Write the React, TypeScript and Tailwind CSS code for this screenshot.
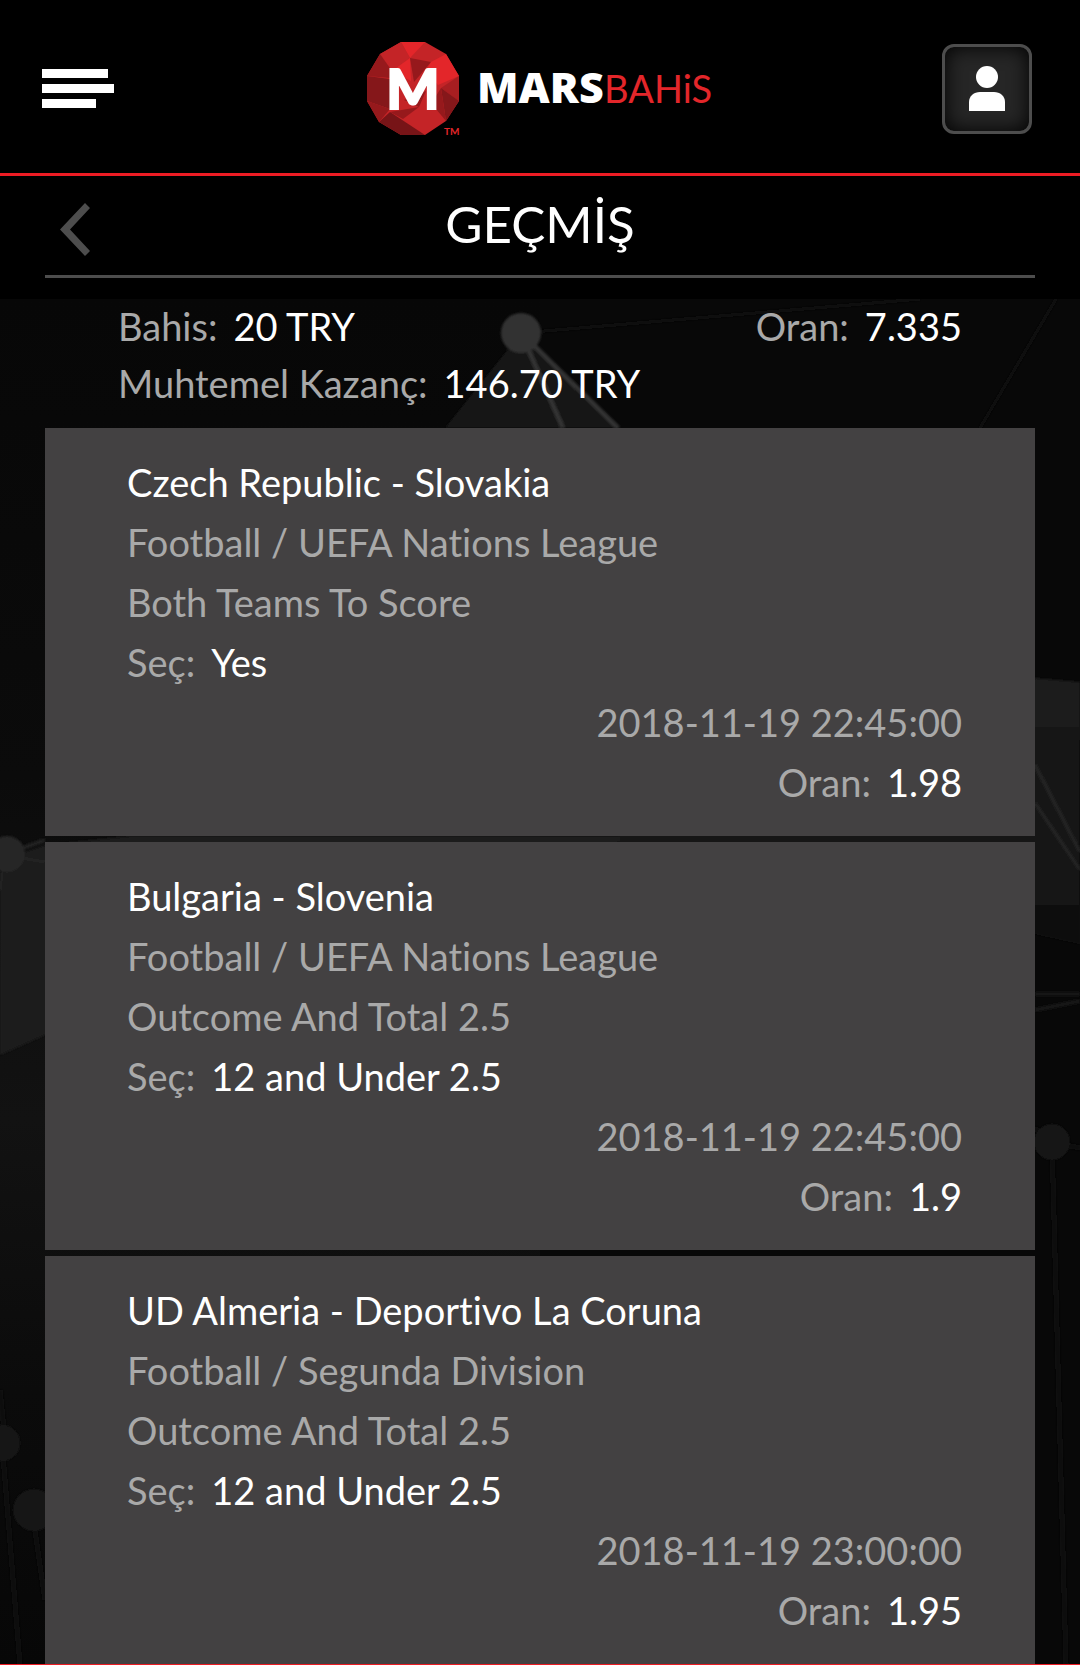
import { ReactNode } from "react";

interface Bet {
  match: string;
  league: string;
  market: string;
  pick: string;
  date: string;
  odds: string;
}

const bets: Bet[] = [
  {
    match: "Czech Republic - Slovakia",
    league: "Football / UEFA Nations League",
    market: "Both Teams To Score",
    pick: "Yes",
    date: "2018-11-19 22:45:00",
    odds: "1.98",
  },
  {
    match: "Bulgaria - Slovenia",
    league: "Football / UEFA Nations League",
    market: "Outcome And Total 2.5",
    pick: "12 and Under 2.5",
    date: "2018-11-19 22:45:00",
    odds: "1.9",
  },
  {
    match: "UD Almeria - Deportivo La Coruna",
    league: "Football / Segunda Division",
    market: "Outcome And Total 2.5",
    pick: "12 and Under 2.5",
    date: "2018-11-19 23:00:00",
    odds: "1.95",
  },
];

function Logo() {
  return (
    <a href="#" aria-label="Marsbahis" className="block">
      <svg width="348" height="96" viewBox="0 0 348 96" aria-hidden="true">
        <polygon
          points="35,1 59,1 80,13 93,35 93,60 80,80 59,94 35,94 13,81 1,60 1,35 14,13"
          fill="#c42427"
        />
        <polygon points="35,1 59,1 44,17" fill="#e3262a" />
        <polygon points="14,13 35,1 44,17 26,30" fill="#c42427" />
        <polygon points="14,13 26,30 24,37 1,35" fill="#96191c" />
        <polygon points="44,17 26,30 45,40" fill="#e3262a" />
        <polygon points="44,17 65,21 48,41" fill="#96191c" />
        <polygon points="80,13 93,35 72,44 60,30 65,21" fill="#e3262a" />
        <polygon points="1,35 24,38 24,68 1,60" fill="#85171a" />
        <polygon points="1,60 24,68 13,81" fill="#96191c" />
        <polygon points="24,71 59,94 35,94 13,81" fill="#771417" />
        <polygon points="24,71 53,66 37,78" fill="#96191c" />
        <polygon points="38,59 60,50 53,66" fill="#96191c" />
        <polygon points="75,47 93,35 93,60" fill="#a81e21" />
        <polygon points="75,47 93,60 80,80" fill="#85171a" />
        <polygon points="75,47 80,80 70,68 70,55" fill="#96191c" />
        <text
          x="47"
          y="68"
          textAnchor="middle"
          fill="#fff"
          stroke="#fff"
          strokeWidth="2"
          className="font-['Lato',sans-serif] text-[56px] font-black"
        >
          M
        </text>
        <text x="78" y="94" fill="#e3262a" className="font-['Lato',sans-serif] text-[10px] font-bold">
          TM
        </text>
        <text
          x="111"
          y="62"
          fill="#fff"
          className="font-['Open_Sans',sans-serif] text-[43px] font-extrabold"
        >
          MARS
        </text>
        <text x="238" y="62" fill="#e3262a" className="font-['Lato',sans-serif] text-[38px]">
          BAHiS
        </text>
      </svg>
    </a>
  );
}

// Faint network pattern behind the bet list
function Backdrop() {
  return (
    <svg
      className="absolute inset-0 h-full w-full"
      viewBox="0 299 1080 1365"
      preserveAspectRatio="xMidYMid slice"
      aria-hidden="true"
    >
      <defs>
        <linearGradient id="base" x1="0" y1="0" x2="0" y2="1">
          <stop offset="0" stopColor="#070707" />
          <stop offset="0.35" stopColor="#0b0b0b" />
          <stop offset="0.6" stopColor="#121212" />
          <stop offset="0.8" stopColor="#0b0b0b" />
          <stop offset="1" stopColor="#070707" />
        </linearGradient>
        <linearGradient id="right" x1="0" y1="0" x2="0" y2="1">
          <stop offset="0" stopColor="#1c1c1c" />
          <stop offset="1" stopColor="#101010" />
        </linearGradient>
        <filter id="soft">
          <feGaussianBlur stdDeviation="1" />
        </filter>
      </defs>
      <rect y="299" width="540" height="1366" fill="url(#base)" />
      <rect x="540" y="299" width="540" height="1366" fill="#080808" />
      <g filter="url(#soft)">
        <polygon points="521,333 445,428 620,428" fill="#141414" />
        <polygon points="0,860 45,845 130,836 620,836 620,842 45,1035 0,1055" fill="#1c1c1c" />
        <polygon points="0,975 45,920 45,1035 0,1055" fill="#1e1e1e" />
        <polygon points="1035,678 1080,682 1080,944 1035,934 620,845 620,832" fill="url(#right)" />
        <path d="M521 333L563 428M521 333L618 428" stroke="#333" strokeWidth="5" />
        <path d="M521 333L920 299M1056 299L980 428" stroke="#101010" strokeWidth="3" />
        <g stroke="#232323" strokeWidth="4">
          <path d="M1035 765L1080 852M1035 803L1080 870" />
          <path d="M1035 994H1080M1035 1010L1080 1001" stroke="#191919" />
          <path d="M4 855L45 840M4 855L45 862M4 855L0 890" stroke="#202020" />
        </g>
        <g stroke="#101010" strokeWidth="5">
          <path d="M1052 1143L1066 1665M1035 1128L1052 1142L1080 1148" fill="none" />
          <path d="M2 1443L20 1665M0 1390L6 1450M32 1510L45 1600" />
        </g>
        <circle cx="521" cy="333" r="20" fill="#333" />
        <circle cx="7" cy="854" r="18" fill="#262626" />
        <circle cx="1052" cy="1142" r="18" fill="#131313" />
        <circle cx="2" cy="1443" r="18" fill="#161616" />
        <circle cx="34" cy="1510" r="21" fill="#141414" />
      </g>
    </svg>
  );
}

function Field({ label, children }: { label: string; children: ReactNode }) {
  return (
    <p className="flex gap-4">
      <span className="text-[#a9a9a9]">{label}:</span>
      <span>{children}</span>
    </p>
  );
}

function BetCard({ bet }: { bet: Bet }) {
  return (
    <li className="bg-[#434142] py-6 pr-[73px] pl-[82px] leading-[60px]">
      <h2>{bet.match}</h2>
      <p className="text-[#a9a9a9]">{bet.league}</p>
      <p className="text-[#a9a9a9]">{bet.market}</p>
      <Field label="Seç">{bet.pick}</Field>
      <div className="flex flex-col items-end">
        <time className="text-[#a9a9a9]">{bet.date}</time>
        <Field label="Oran">{bet.odds}</Field>
      </div>
    </li>
  );
}

export default function App() {
  return (
    <div className="min-h-screen bg-[#070707] font-['Lato',sans-serif] text-[38px] text-white [font-variant-ligatures:none]">
      <header className="grid h-[176px] grid-cols-[1fr_auto_1fr] items-center border-b-3 border-[#ed1c24] bg-black pt-1 pr-12 pl-12">
        <button type="button" aria-label="Menü" className="-ml-1.5 flex w-[72px] flex-col gap-1.5">
          <span className="h-[9px] w-[66px] bg-white" />
          <span className="h-[9px] w-[72px] bg-white" />
          <span className="h-[9px] w-[54px] bg-white" />
        </button>
        <Logo />
        <button
          type="button"
          aria-label="Hesabım"
          className="flex size-[90px] items-center justify-center justify-self-end rounded-xl border-3 border-[#4d4d4d] bg-[#262626] shadow-[inset_0_0_20px_#000]"
        >
          <svg width="36" height="45" viewBox="0 0 36 45" fill="#fff" aria-hidden="true">
            <circle cx="18" cy="11" r="11" />
            <path d="M0 45V36C0 30 5 26 11 26H25C31 26 36 30 36 36V45Z" />
          </svg>
        </button>
      </header>

      <div className="bg-black px-[45px] pb-[21px]">
        <div className="grid h-[102px] grid-cols-[1fr_auto_1fr] items-center border-b-3 border-[#4d4d4d]">
          <button type="button" aria-label="Geri" className="w-[45px] pt-2 pl-[15px]">
            <svg width="30" height="53" viewBox="0 0 30 53" fill="#4d4d4d" aria-hidden="true">
              <path d="M25 0L30 5L10 26.500L30 48L25 53L0 26.500Z" />
            </svg>
          </button>
          <h1 className="pb-1 text-[51px] leading-[60px]">GEÇMİŞ</h1>
        </div>
      </div>

      <main className="relative">
        <Backdrop />
        <div className="relative px-[45px]">
          <section className="flex flex-col gap-[3px] px-[73px] pb-[18px] leading-[54px]">
            <div className="flex justify-between">
              <Field label="Bahis">20 TRY</Field>
              <Field label="Oran">7.335</Field>
            </div>
            <Field label="Muhtemel Kazanç">146.70 TRY</Field>
          </section>
          <ul className="flex flex-col gap-1.5">
            {bets.map((bet) => (
              <BetCard key={bet.match} bet={bet} />
            ))}
          </ul>
        </div>
      </main>
      <footer className="h-px bg-[#ed1c24]" />
    </div>
  );
}
